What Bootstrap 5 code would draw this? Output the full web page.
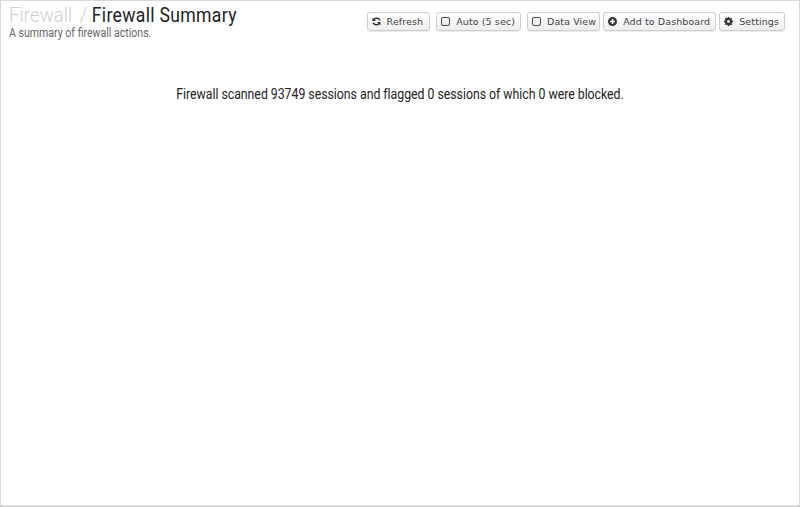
<!DOCTYPE html>
<html lang="en"><head><meta charset="utf-8"><title>Firewall Summary</title>
<link href="https://cdn.jsdelivr.net/npm/bootstrap@5.3.0/dist/css/bootstrap.min.css" rel="stylesheet">
<style>
html,body{height:100%;background:#fff}
.app-frame{height:507px;border:1px solid #d9d9d9;border-bottom-width:2px;overflow:hidden;padding:2px 8px 0 8px}
.head-title{font:400 20px/24px Roboto,sans-serif;letter-spacing:.36px;color:#222;margin:0;white-space:nowrap;transform:scaleX(.88);transform-origin:left center}
.head-title .crumb{font-size:21px;color:#cfcfcf;font-weight:300;letter-spacing:.15px;word-spacing:3px}
.head-sub{font:400 12px/13px Roboto,sans-serif;color:#666;margin:0;white-space:nowrap;transform:scaleX(.88);transform-origin:left center}
.tool-bar{gap:3px;padding-top:9px;margin-right:6px}
.tool-btn{display:flex;align-items:center;gap:6px;height:19px;padding:0 5px 0 4px;font:400 9.5px/17px "DejaVu Sans",sans-serif;letter-spacing:.1px;color:#444;background:linear-gradient(#fff,#eee);border:1px solid #ccc;border-radius:3px;white-space:nowrap;box-shadow:0 1px 1px rgba(0,0,0,.08)}
.tool-btn svg{width:9px;height:9px;flex:none}
.gap-lg{margin-right:3px}
.wide-end{padding-right:6px}
.tight-end{padding-right:3px}
.summary-line{font:400 14px/18px Roboto,sans-serif;letter-spacing:-.03px;color:#222;text-align:center;margin:45px 0 0;transform:scaleX(.88)}
</style></head>
<body>
<div class="app-frame">
 <div class="d-flex justify-content-between align-items-start">
  <div>
   <h1 class="head-title"><span class="crumb">Firewall /</span> Firewall Summary</h1>
   <p class="head-sub">A summary of firewall actions.</p>
  </div>
  <div class="d-flex tool-bar">
   <button type="button" class="tool-btn gap-lg wide-end"><svg viewBox="0 0 12 12"><path d="M11.600 4.800A5.800 5.800 0 0 0 2 2.200L.6.800V5.400h4.600L3.500 3.700a3.700 3.700 0 0 1 6 1.100zM.4 7.200A5.800 5.800 0 0 0 10 9.800l1.400 1.400V6.600H6.800l1.700 1.700a3.700 3.700 0 0 1-6-1.100z" fill="#333"/></svg>Refresh</button>
   <button type="button" class="tool-btn gap-lg"><svg viewBox="0 0 12 12"><rect x=".7" y=".7" width="10.600" height="10.600" rx="2" fill="none" stroke="#333" stroke-width="1.200"/></svg>Auto (5 sec)</button>
   <button type="button" class="tool-btn tight-end"><svg viewBox="0 0 12 12"><rect x=".7" y=".7" width="10.600" height="10.600" rx="2" fill="none" stroke="#333" stroke-width="1.200"/></svg>Data View</button>
   <button type="button" class="tool-btn"><svg viewBox="0 0 12 12"><path fill-rule="evenodd" d="M6 0a6 6 0 1 0 0 12A6 6 0 0 0 6 0zM4.900 2.800h2.200v2.100h2.100v2.200H7.100v2.100H4.900V7.100H2.800V4.900h2.100z" fill="#333"/></svg>Add to Dashboard</button>
   <button type="button" class="tool-btn"><svg viewBox="0 0 12 12"><path fill-rule="evenodd" d="M5 0h2l.3 1.500 1 .4 1.300-.8 1.400 1.400-.8 1.300.4 1 1.400.3v2l-1.400.3-.4 1 .8 1.300-1.400 1.400-1.300-.8-1 .4L7 12H5l-.3-1.500-1-.4-1.300.8L1 9.500l.8-1.300-.4-1L0 6.900v-2l1.400-.3.4-1L1 2.300 2.400.9l1.300.8 1-.4zM6 4.100a1.900 1.900 0 1 0 0 3.800 1.900 1.900 0 0 0 0-3.800z" fill="#333"/></svg>Settings</button>
  </div>
 </div>
 <p class="summary-line">Firewall scanned 93749 sessions and flagged 0 sessions of which 0 were blocked.</p>
</div>
<script src="https://cdn.jsdelivr.net/npm/bootstrap@5.3.0/dist/js/bootstrap.bundle.min.js"></script>
</body></html>
